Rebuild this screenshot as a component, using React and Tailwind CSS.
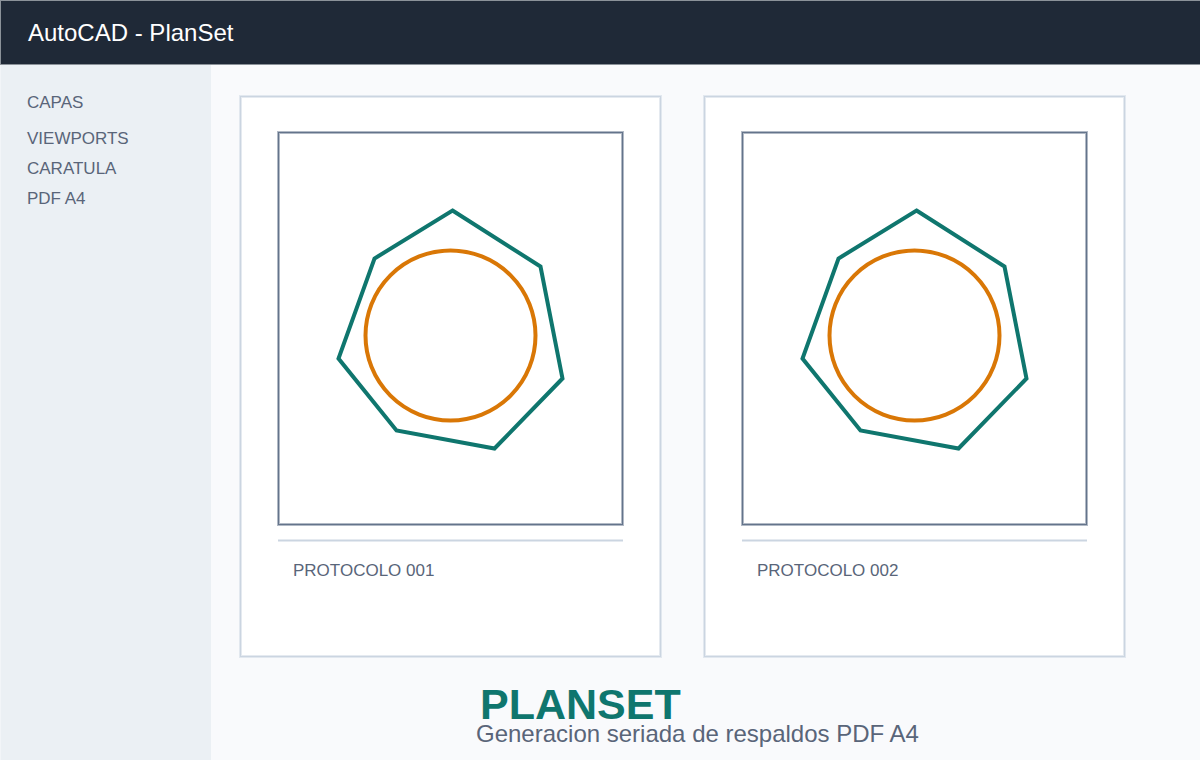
const layers = ['CAPAS', 'VIEWPORTS', 'CARATULA', 'PDF A4'];
const sheets = ['PROTOCOLO 001', 'PROTOCOLO 002'];

function Drawing() {
  return (
    <svg viewBox="0 0 343 391" className="block w-full" fill="none" strokeWidth="4" aria-hidden="true">
      <path
        d="M173.500 77.500L261.500 133.500L283.500 245.500L215.500 315.500L117.500 297.500L59.500 225.500L95.500 125.500Z"
        className="stroke-[#0f766e]"
        strokeLinejoin="miter"
      />
      <circle cx="171.500" cy="202.500" r="85" className="stroke-[#d97706]" />
    </svg>
  );
}

function Sheet({ title }) {
  return (
    <article className="flex-1 bg-white border border-[#cbd5e1] px-[37px] pt-[35px] pb-[75px] shadow-[0_0_0_1px_#cbd5e180,inset_0_0_0_1px_#cbd5e180]">
      <div className="border border-[#64748b] shadow-[0_0_0_1px_#64748b80,inset_0_0_0_1px_#64748b80]">
        <Drawing />
      </div>
      <div className="mt-[15px] h-px bg-[#cbd5e1] shadow-[0_1px_#cbd5e180,0_-1px_#cbd5e180]" />
      <h2 className="mt-5 ml-[15px] text-[17px] leading-5 text-[#596579]">{title}</h2>
    </article>
  );
}

export default function App() {
  return (
    <div className="min-h-screen flex flex-col bg-[#f9fafc] font-['Liberation_Sans',Arial,sans-serif]">
      <header className="h-[65px] flex items-center px-[27px] bg-[#1f2937] border-y border-l border-[#8b9299]">
        <h1 className="text-2xl text-white">AutoCAD - PlanSet</h1>
      </header>

      <div className="flex-1 flex">
        <nav className="w-[211px] shrink-0 bg-[#ebf0f4] border-l border-[#f2f5f8] pl-[26px] pt-7 text-[17px] leading-5 text-[#596579]">
          <ul className="flex flex-col gap-[10px]">
            {layers.map(name => (
              <li key={name} className="first:mb-[6px]">{name}</li>
            ))}
          </ul>
        </nav>

        <main className="flex-1 flex flex-col pt-[31px] pl-[29px] pr-[75px]">
          <div className="flex gap-[43px]">
            {sheets.map(title => (
              <Sheet key={title} title={title} />
            ))}
          </div>
          <div className="mt-[29px] pl-[236px] whitespace-nowrap">
            <p className="pl-1 text-[43px] leading-9 font-bold text-[#0f766e]">PLANSET</p>
            <p className="text-2xl leading-6 text-[#596579]">Generacion seriada de respaldos PDF A4</p>
          </div>
        </main>
      </div>
    </div>
  );
}
